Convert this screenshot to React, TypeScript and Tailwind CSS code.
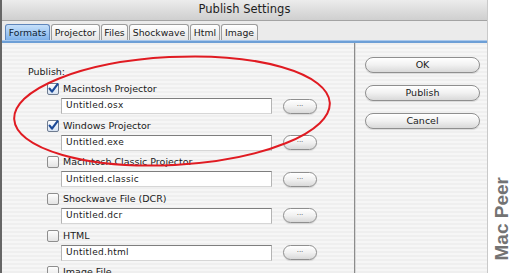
import React from "react";

type Format = {
  label: string;
  file: string;
  checked: boolean;
};

const formats: Format[] = [
  { label: "Macintosh Projector", file: "Untitled.osx", checked: true },
  { label: "Windows Projector", file: "Untitled.exe", checked: true },
  { label: "Macintosh Classic Projector", file: "Untitled.classic", checked: false },
  { label: "Shockwave File (DCR)", file: "Untitled.dcr", checked: false },
  { label: "HTML", file: "Untitled.html", checked: false },
  { label: "Image File", file: "Untitled.jpg", checked: false },
];

const tabs = [
  { name: "Formats", w: "w-[45px]" },
  { name: "Projector", w: "w-[49px]" },
  { name: "Files", w: "w-[27px]" },
  { name: "Shockwave", w: "w-[60px]" },
  { name: "Html", w: "w-[30px]" },
  { name: "Image", w: "w-[37px]" },
];

const stripes =
  "bg-[repeating-linear-gradient(180deg,#efefef_0px,#efefef_2px,#f6f6f6_2px,#f6f6f6_4px)]";

function CheckBox({ checked }: { checked: boolean }) {
  return (
    <svg width="12" height="12" viewBox="0 0 12 12" className="shrink-0">
      <defs>
        <linearGradient id={checked ? "cbOn" : "cbOff"} x1="0" y1="0" x2="0" y2="1">
          <stop offset="0" stopColor="#ffffff" />
          <stop offset="1" stopColor={checked ? "#d6e2f2" : "#e2e2e2"} />
        </linearGradient>
      </defs>
      <rect
        x="0.5"
        y="0.5"
        width="11"
        height="11"
        rx="1.5"
        fill={`url(#${checked ? "cbOn" : "cbOff"})`}
        stroke={checked ? "#6f7c90" : "#8e8e8e"}
      />
      {checked && (
        <path
          d="M2.6 5.6 L5 8.6 L10.6 1.2"
          fill="none"
          stroke="#1c4a98"
          strokeWidth="2.2"
          strokeLinecap="round"
          strokeLinejoin="round"
        />
      )}
    </svg>
  );
}

function PillButton({ children, className }: { children: React.ReactNode; className: string }) {
  return (
    <div
      className={`${className} shrink-0 rounded-full border border-[#8f8f8f] bg-gradient-to-b from-[#ffffff] via-[#f1f1f1] to-[#d9d9d9] shadow-[inset_0_1px_0_#ffffff,0_1px_1px_rgba(0,0,0,0.12)] flex items-center justify-center text-[#1a1a1a]`}
    >
      {children}
    </div>
  );
}

function FormatRow({ item }: { item: Format }) {
  return (
    <div className="h-[36.67px] shrink-0 flex flex-col">
      <div className="h-[18px] shrink-0 flex items-center gap-[4px] pl-[45px]">
        <CheckBox checked={item.checked} />
        <span className="text-[9.5px] text-[#1a1a1a] whitespace-nowrap">{item.label}</span>
      </div>
      <div className="h-[16px] shrink-0 flex items-center pl-[59px] gap-[11px]">
        <div className="w-[211px] h-[16px] bg-white border-t border-t-[#7e7e7e] border-x border-x-[#b4b4b4] border-b border-b-[#d6d6d6] flex items-center pl-[4px]">
          <span className="text-[9px] tracking-[0.3px] text-[#1a1a1a]">{item.file}</span>
        </div>
        <PillButton className="w-[34px] h-[15px]">
          <span className="text-[7px] leading-none text-[#555] -mt-[4px]">...</span>
        </PillButton>
      </div>
    </div>
  );
}

export default function App() {
  return (
    <div className="w-[514px] h-[273px] bg-white overflow-hidden flex relative font-['DejaVu_Sans',sans-serif]">
      <div className="w-[488px] h-full flex flex-col border-l-2 border-l-[#666] border-r border-r-[#c9c9c9]">
        {/* title bar */}
        <div className="h-[21px] shrink-0 bg-gradient-to-b from-[#ececec] to-[#cfcfcf] border-b border-b-[#a3a3a3] flex items-center justify-center">
          <span className="text-[11.5px] text-[#1e1e1e]">Publish Settings</span>
        </div>

        {/* tabs */}
        <div className="h-[22px] shrink-0 bg-[#ebebeb] flex flex-col">
          <div className="h-[16px] mt-[3px] flex items-end gap-[1px] pl-[3px]">
            {tabs.map((t, i) => (
              <div
                key={t.name}
                className={`${t.w} h-[16px] rounded-t-[3px] border border-b-0 flex items-center justify-center text-[9.3px] whitespace-nowrap ${
                  i === 0
                    ? "border-[#5f86bb] bg-gradient-to-b from-[#c6e0fa] to-[#7fb2ea] text-[#0e1d33]"
                    : "border-[#9c9c9c] bg-gradient-to-b from-[#ffffff] to-[#e4e4e4] text-[#1a1a1a]"
                }`}
              >
                {t.name}
              </div>
            ))}
          </div>
          <div className="h-[3px] bg-[#6d9fd6] border-t border-t-[#a9c8ec]" />
        </div>

        {/* body */}
        <div className="flex-1 flex min-h-0 overflow-hidden">
          <div className={`w-[352px] ${stripes} flex flex-col pt-[23px] overflow-hidden`}>
            <div className="h-[12px] shrink-0 pl-[26px] flex items-center text-[9.5px] text-[#1a1a1a] mb-[2px]">
              Publish:
            </div>
            {formats.map((f) => (
              <FormatRow key={f.label} item={f} />
            ))}
          </div>
          <div className="w-[2px] bg-[#8c8c8c] border-r border-r-[#d8d8d8]" />
          <div className={`flex-1 ${stripes} flex flex-col gap-[12px] pt-[14px] pl-[9px]`}>
            {["OK", "Publish", "Cancel"].map((b) => (
              <PillButton key={b} className="w-[115px] h-[16px]">
                <span className="text-[9.5px]">{b}</span>
              </PillButton>
            ))}
          </div>
        </div>
      </div>

      {/* watermark */}
      <div className="flex-1 flex flex-col items-center justify-end pb-[13px]">
        <span className="[writing-mode:vertical-rl] rotate-180 font-['Liberation_Sans',sans-serif] font-bold text-[19px] leading-none text-[#737373] whitespace-nowrap">
          Mac Peer
        </span>
      </div>

      {/* hand-drawn annotation */}
      <svg
        className="absolute left-0 top-0 pointer-events-none"
        width="514"
        height="273"
        viewBox="0 0 514 273"
      >
        <ellipse
          cx="172"
          cy="111"
          rx="158"
          ry="54"
          transform="rotate(-3 172 111)"
          fill="none"
          stroke="#e01b22"
          strokeWidth="2"
        />
      </svg>
    </div>
  );
}
